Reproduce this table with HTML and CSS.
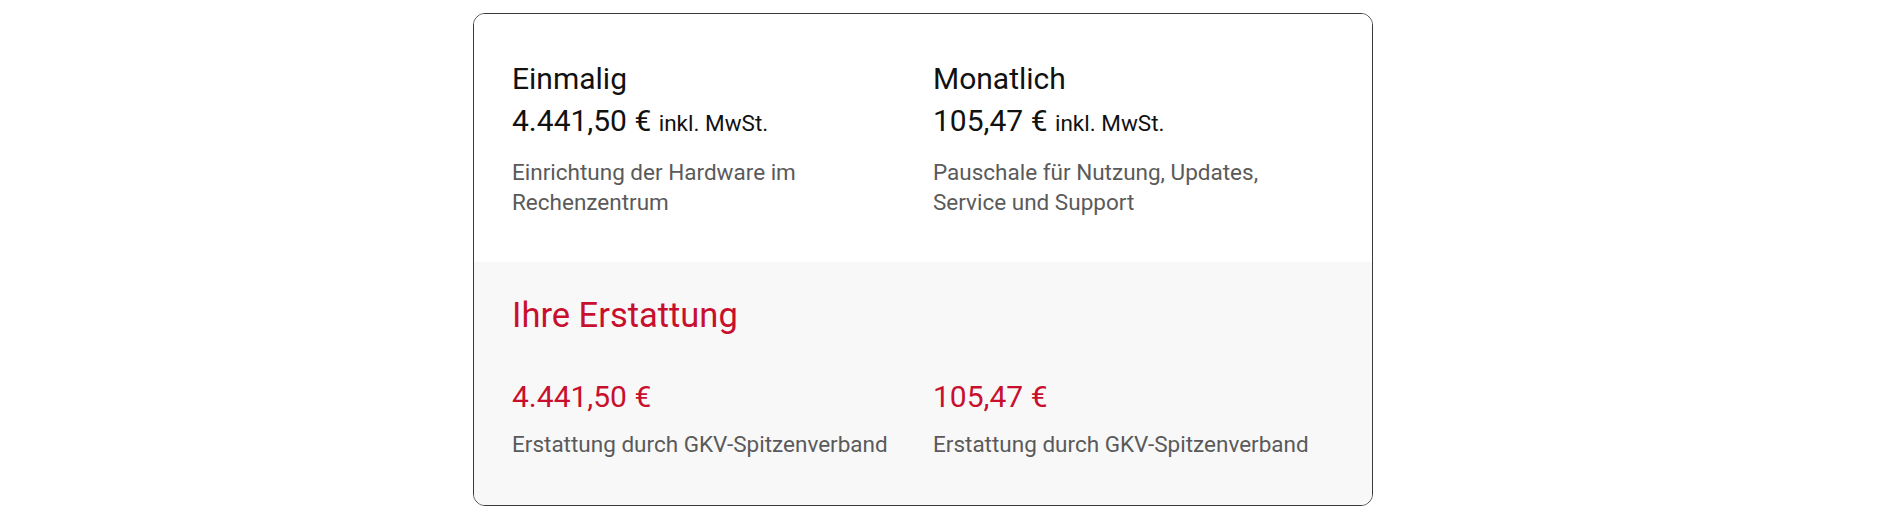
FILE: index.html
```html
<!DOCTYPE html>
<html lang="de">
<head>
<meta charset="utf-8">
<title>Kosten</title>
<link rel="stylesheet" href="styles.css">
</head>
<body>
<div class="page">
  <div class="card">
    <section class="costs">
      <div class="col">
        <h3 class="label">Einmalig</h3>
        <div class="price">4.441,50 € <span class="vat">inkl. MwSt.</span></div>
        <p class="desc">Einrichtung der Hardware im<br>Rechenzentrum</p>
      </div>
      <div class="col">
        <h3 class="label">Monatlich</h3>
        <div class="price">105,47 € <span class="vat">inkl. MwSt.</span></div>
        <p class="desc">Pauschale für Nutzung, Updates,<br>Service und Support</p>
      </div>
    </section>
    <section class="refund">
      <h2 class="refund-title">Ihre Erstattung</h2>
      <div class="refund-grid">
        <div class="col">
          <div class="refund-price">4.441,50 €</div>
          <p class="desc refund-desc">Erstattung durch GKV-Spitzenverband</p>
        </div>
        <div class="col">
          <div class="refund-price">105,47 €</div>
          <p class="desc refund-desc">Erstattung durch GKV-Spitzenverband</p>
        </div>
      </div>
    </section>
  </div>
</div>
</body>
</html>
```

FILE: styles.css
```css
* { box-sizing: border-box; }

html, body {
  margin: 0;
  padding: 0;
  background: #ffffff;
}

body {
  font-family: Roboto, "Liberation Sans", Arial, sans-serif;
  color: #111111;
}

.page {
  width: 940px;
  margin: 0 auto;
  padding-top: 13px;
}

.card {
  width: 900px;
  border: 1px solid #3a3a3a;
  border-radius: 12px;
  overflow: hidden;
  background: #ffffff;
}

.costs {
  display: grid;
  grid-template-columns: 421px 1fr;
  padding: 46px 38px 45px 38px;
  background: #ffffff;
}

.label {
  margin: 0 0 4px 0;
  font-size: 30px;
  line-height: 38px;
  font-weight: 400;
  color: #111111;
}

.price {
  font-size: 30px;
  line-height: 38px;
  font-weight: 400;
  color: #111111;
}

.vat {
  font-size: 22.5px;
}

.desc {
  margin: 15px 0 0 0;
  font-size: 22.5px;
  line-height: 30px;
  color: #5a5a5a;
}

.refund {
  background: #f8f8f8;
  padding: 32px 38px 46px 38px;
}

.refund-title {
  margin: 0;
  font-size: 34.5px;
  line-height: 42px;
  font-weight: 400;
  color: #c8102e;
}

.refund-grid {
  display: grid;
  grid-template-columns: 421px 1fr;
  margin-top: 42px;
}

.refund-price {
  font-size: 30px;
  line-height: 38px;
  color: #c8102e;
}

.refund-desc {
  margin-top: 13px;
}
```
